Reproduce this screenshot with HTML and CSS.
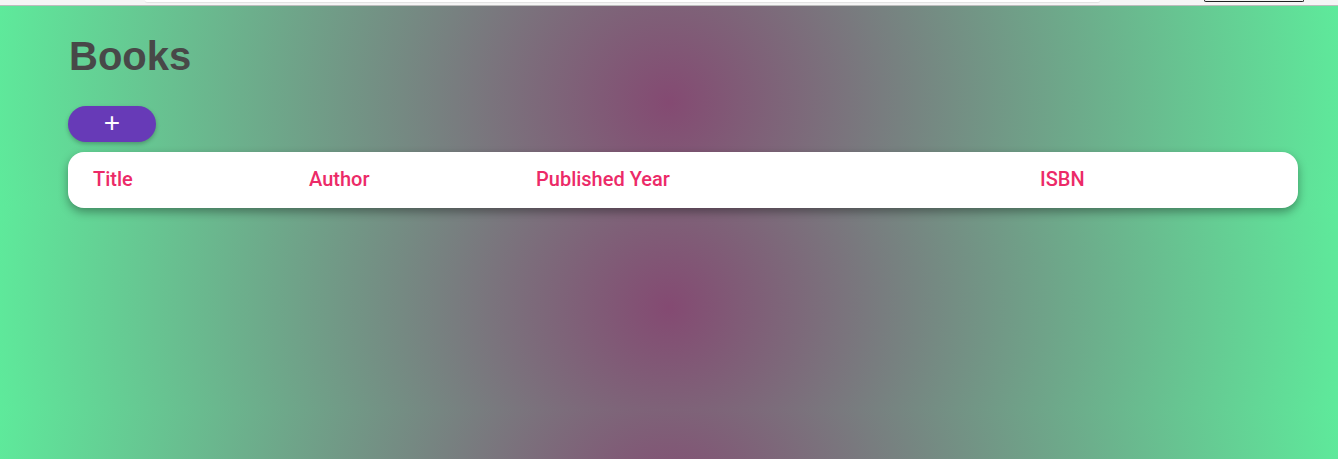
FILE: index.html
```html
<!DOCTYPE html>
<html lang="en">
<head>
<meta charset="utf-8">
<title>Books</title>
<link rel="stylesheet" href="styles.css">
</head>
<body>
<div class="chrome">
  <div class="chrome-field"></div>
  <div class="chrome-btn"></div>
</div>
<main class="page">
  <h1 class="page-title">Books</h1>
  <button class="add-btn" type="button">+</button>
  <div class="card">
    <div class="table-head">
      <div class="th">Title</div>
      <div class="th">Author</div>
      <div class="th">Published Year</div>
      <div class="th">ISBN</div>
    </div>
  </div>
</main>
</body>
</html>
```
FILE: styles.css
```css
html {
  height: 100%;
}
body {
  margin: 0;
  min-height: 100%;
  font-family: Roboto, "Liberation Sans", Arial, sans-serif;
  background-color: #5eea9b;
  background-image: radial-gradient(circle, #844a72 0%, #5eea9b 100%);
  background-size: 100% 205px;
  background-position: 0 0;
  background-repeat: repeat;
}
.chrome {
  height: 5px;
  background: #f5f5f5;
  border-bottom: 1px solid #bdbdbd;
  display: flex;
  align-items: flex-start;
  position: relative;
}
.chrome-field {
  margin-left: 145px;
  width: 955px;
  height: 2px;
  background: #fff;
  border-radius: 0 0 3px 3px;
  box-shadow: 0 1px 1px rgba(0,0,0,0.08);
}
.chrome-btn {
  margin-left: 104px;
  width: 98px;
  height: 1px;
  border: 1px solid #222;
  border-top: none;
  border-radius: 0 0 3px 3px;
}
.page {
  padding: 0 40px 20px 68px;
}
.page-title {
  margin: 0;
  padding-top: 27px;
  font-family: "Liberation Sans", Arial, sans-serif;
  font-size: 40px;
  font-weight: 700;
  line-height: 46px;
  color: #484848;
  padding-left: 1px;
}
.add-btn {
  display: flex;
  align-items: center;
  justify-content: center;
  margin-top: 27px;
  width: 88px;
  height: 36px;
  border: none;
  border-radius: 18px;
  background: #673ab7;
  color: #fff;
  font-family: "Liberation Sans", Arial, sans-serif;
  font-size: 28px;
  font-weight: 400;
  line-height: 1;
  padding: 0 0 2px;
  box-shadow: 0 2px 4px rgba(0,0,0,0.25);
}
.card {
  margin-top: 10px;
  background: #fff;
  border-radius: 16px;
  box-shadow: 0 4px 10px rgba(0,0,0,0.35);
}
.table-head {
  display: grid;
  grid-template-columns: 216fr 227fr 504fr 258fr;
  padding-left: 25px;
  height: 56px;
  padding-bottom: 2px;
  box-sizing: border-box;
  align-items: center;
}
.th {
  color: #ec2a68;
  font-size: 20px;
  font-weight: 500;
}
```
